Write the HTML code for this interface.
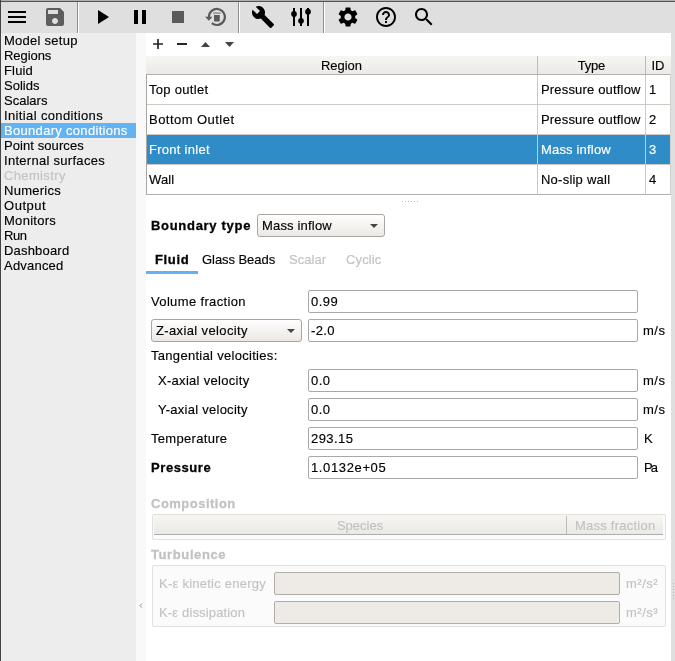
<!DOCTYPE html>
<html><head><meta charset="utf-8">
<style>
*{box-sizing:border-box;margin:0;padding:0}
html,body{width:675px;height:661px;overflow:hidden;background:#ededed}
body{position:relative;font-family:"Liberation Sans",sans-serif;font-size:13px;letter-spacing:0.25px;color:#000}
.a{position:absolute}
.t{position:absolute;line-height:15px;white-space:nowrap;will-change:transform;-webkit-text-stroke:0.15px currentColor}
.b{font-weight:bold;letter-spacing:0.5px}
.dis{color:#c2c2c2}
#tb{left:0;top:0;width:675px;height:33px;background:#dfdfdf}
.sep{position:absolute;top:2px;width:1px;height:31px;background:#8e8e8e}
.sepw{position:absolute;top:2px;width:1px;height:31px;background:#fff}
.ic{position:absolute;top:5px;width:24px;height:24px}
#nav{left:1px;top:33px;width:135px;height:628px;background:#ededed}
.nv{position:absolute;left:4px;line-height:15px;white-space:nowrap}
#spl{left:136px;top:33px;width:10px;height:628px;background:#f9f9f9}
#main{left:146px;top:33px;width:525px;height:628px;background:#fff}
#rs{left:671px;top:33px;width:4px;height:628px;background:#dfdfdf}
.hdr{position:absolute;top:56px;height:18px;background:linear-gradient(#f8f6f2,#ebe9e5)}
.grid{position:absolute;background:#cdcac6}
.le{position:absolute;height:23px;border:1px solid #aaa8a4;border-radius:2px;background:#fff}
.led{position:absolute;height:23px;border:1px solid #b1aeaa;border-radius:2px;background:#eeebe7}
.cb{position:absolute;height:23px;border:1px solid #a9a6a2;border-radius:3px;background:linear-gradient(#fefefe,#ece8e4)}
.arr{position:absolute;width:0;height:0;border-left:4px solid transparent;border-right:4px solid transparent;border-top:4px solid #454545}
</style></head><body>
<!-- toolbar -->
<div id="tb" class="a"></div>
<div class="a" style="left:0;top:0;width:675px;height:1px;background:#aeaeae"></div>
<div class="a" style="left:0;top:1px;width:675px;height:1px;background:#555"></div>
<div class="a" style="left:0;top:0;width:1px;height:661px;background:#434544"></div>
<div class="sep" style="left:77px"></div><div class="sepw" style="left:78px"></div>
<div class="sep" style="left:238px"></div><div class="sepw" style="left:239px"></div>
<div class="sep" style="left:323px"></div><div class="sepw" style="left:324px"></div>

<svg class="ic" style="left:5px" viewBox="0 0 24 24"><path fill="#000" d="M3 18h18v-2H3v2zm0-5h18v-2H3v2zm0-7v2h18V6H3z"/></svg>
<svg class="ic" style="left:43px" viewBox="0 0 24 24"><path fill="#5e5d5b" d="M17 3H5c-1.11 0-2 .9-2 2v14c0 1.1.89 2 2 2h14c1.1 0 2-.9 2-2V7l-4-4zm-5 16c-1.66 0-3-1.34-3-3s1.34-3 3-3 3 1.34 3 3-1.34 3-3 3zm3-10H5V5h10v4z"/></svg>
<svg class="ic" style="left:90px" viewBox="0 0 24 24"><path fill="#000" d="M8 5v14l11-7z"/></svg>
<svg class="ic" style="left:128px" viewBox="0 0 24 24"><path fill="#000" d="M6 19h4V5H6v14zm8-14v14h4V5h-4z"/></svg>
<svg class="ic" style="left:166px" viewBox="0 0 24 24"><path fill="#5a5a5a" d="M6 6h12v12H6z"/></svg>
<svg class="ic" style="left:204px" viewBox="0 0 24 24"><path d="M4.9 12 A8 8 0 1 1 7.76 18.13" fill="none" stroke="#5a5a5a" stroke-width="2.2"/><path fill="#5a5a5a" d="M1.1 11.8h7.4l-3.7 3.9z"/><path fill="#5a5a5a" opacity="0.75" d="M9.2 7.5h7.5v1.2h-7.5z"/><path fill="#5a5a5a" d="M10 10h5.8l-0.1 6.6h-5.6z"/></svg>
<svg class="ic" style="left:251px" viewBox="0 0 24 24"><path fill="#000" d="M22.7 19l-9.1-9.1c.9-2.3.4-5-1.5-6.9-2-2-5-2.4-7.4-1.3L9 6 6 9 1.6 4.7C.4 7.1.9 10.1 2.9 12.1c1.9 1.9 4.6 2.4 6.9 1.5l9.1 9.1c.4.4 1 .4 1.4 0l2.3-2.3c.5-.4.5-1.1.1-1.4z"/></svg>
<svg class="ic" style="left:289px" viewBox="0 0 24 24"><g fill="#000"><rect x="4" y="3" width="2" height="18"/><rect x="11" y="3" width="2" height="18"/><rect x="18" y="3" width="2" height="18"/><ellipse cx="5" cy="8.9" rx="2.85" ry="2.9"/><ellipse cx="12" cy="15.8" rx="2.85" ry="2.9"/><ellipse cx="19" cy="6.7" rx="2.85" ry="2.9"/></g></svg>
<svg class="ic" style="left:336px" viewBox="0 0 24 24"><path fill="#000" d="M19.14 12.94c.04-.3.06-.61.06-.94 0-.32-.02-.64-.07-.94l2.03-1.58c.18-.14.23-.41.12-.61l-1.92-3.32c-.12-.22-.37-.29-.59-.22l-2.39.96c-.5-.38-1.03-.7-1.62-.94l-.36-2.54c-.04-.24-.24-.41-.48-.41h-3.84c-.24 0-.43.17-.47.41l-.36 2.54c-.59.24-1.13.57-1.62.94l-2.39-.96c-.22-.08-.47 0-.59.22L2.74 8.87c-.12.21-.08.47.12.61l2.03 1.58c-.05.3-.09.63-.09.94s.02.64.07.94l-2.03 1.58c-.18.14-.23.41-.12.61l1.92 3.32c.12.22.37.29.59.22l2.39-.96c.5.38 1.030.7 1.62.94l.36 2.54c.05.24.24.41.48.41h3.84c.24 0 .44-.17.47-.41l.36-2.54c.59-.24 1.13-.56 1.62-.94l2.39.96c.22.08.47 0 .59-.22l1.92-3.32c.12-.22.07-.47-.12-.61l-2.01-1.58zM12 15.6c-1.98 0-3.6-1.62-3.6-3.6s1.62-3.6 3.6-3.6 3.6 1.62 3.6 3.6-1.62 3.6-3.6 3.6z"/></svg>
<svg class="ic" style="left:374px" viewBox="0 0 24 24"><path fill="#000" d="M11 18h2v-2h-2v2zm1-16C6.48 2 2 6.48 2 12s4.48 10 10 10 10-4.48 10-10S17.52 2 12 2zm0 18c-4.41 0-8-3.59-8-8s3.59-8 8-8 8 3.59 8 8-3.59 8-8 8zm0-14c-2.21 0-4 1.790-4 4h2c0-1.1.9-2 2-2s2 .9 2 2c0 2-3 1.75-3 5h2c0-2.25 3-2.5 3-5 0-2.21-1.79-4-4-4z"/></svg>
<svg class="ic" style="left:412px" viewBox="0 0 24 24"><path fill="#000" d="M15.5 14h-.79l-.28-.27C15.41 12.59 16 11.110 16 9.5 16 5.91 13.09 3 9.5 3S3 5.91 3 9.5 5.91 16 9.5 16c1.61 0 3.09-.59 4.23-1.57l.27.28v.79l5 4.99L20.49 19l-4.99-5zm-6 0C7.01 14 5 11.99 5 9.5S7.01 5 9.5 5 14 7.01 14 9.5 11.99 14 9.5 14z"/></svg>

<!-- nav -->
<div id="nav" class="a">
<div class="a" style="left:0;top:90px;width:135px;height:15px;background:#63b3f3"></div>
</div>
<div id="spl" class="a"></div>
<svg class="a" style="left:139px;top:603px" width="4" height="5" viewBox="0 0 4 5"><path d="M2.8 0.5 L1.0 2.5 L2.8 4.5" fill="none" stroke="#8a8a8a" stroke-width="1"/></svg>
<div id="main" class="a"></div>
<div id="rs" class="a"></div>

<!-- main content -->
<!-- mini toolbar -->
<svg class="a" style="left:153px;top:39px" width="10" height="10" viewBox="0 0 10 10"><path d="M5 0v10M0 5h10" stroke="#262626" stroke-width="1.7" fill="none"/></svg>
<div class="a" style="left:177px;top:43.2px;width:10px;height:1.7px;background:#262626"></div>
<svg class="a" style="left:201px;top:42px" width="9" height="5" viewBox="0 0 9 5"><path d="M4.5 0L9 5H0z" fill="#444"/></svg>
<svg class="a" style="left:225px;top:42px" width="9" height="5" viewBox="0 0 9 5"><path d="M0 0H9L4.5 5z" fill="#444"/></svg>

<!-- table -->
<div class="hdr" style="left:146px;width:525px"></div>
<div class="a" style="left:146px;top:74px;width:525px;height:1px;background:#b3b0ab"></div>
<div class="a" style="left:537px;top:56px;width:1px;height:18px;background:#bfbcb8"></div>
<div class="a" style="left:645px;top:56px;width:1px;height:18px;background:#bfbcb8"></div>
<div class="a" style="left:146px;top:74px;width:1px;height:121px;background:#a9a6a2"></div>
<div class="a" style="left:670px;top:74px;width:1px;height:121px;background:#d4d2ce"></div>
<div class="a" style="left:147px;top:135px;width:523px;height:29px;background:#308cc6"></div>
<div class="grid" style="left:147px;top:104px;width:523px;height:1px"></div>
<div class="grid" style="left:147px;top:134px;width:523px;height:1px"></div>
<div class="grid" style="left:147px;top:164px;width:523px;height:1px"></div>
<div class="a" style="left:146px;top:194px;width:525px;height:1px;background:#b3b0ab"></div>
<div class="grid" style="left:537px;top:75px;width:1px;height:119px"></div>
<div class="grid" style="left:645px;top:75px;width:1px;height:119px"></div>
<!-- splitter dots -->
<div class="a" style="left:402px;top:201px;width:1px;height:1px;background:#bbb"></div>
<div class="a" style="left:405px;top:201px;width:1px;height:1px;background:#bbb"></div>
<div class="a" style="left:408px;top:201px;width:1px;height:1px;background:#bbb"></div>
<div class="a" style="left:411px;top:201px;width:1px;height:1px;background:#bbb"></div>
<div class="a" style="left:414px;top:201px;width:1px;height:1px;background:#bbb"></div>
<div class="a" style="left:417px;top:201px;width:1px;height:1px;background:#bbb"></div>

<!-- boundary type -->
<div class="cb" style="left:257px;top:214px;width:128px"></div>
<div class="arr" style="left:370px;top:224px"></div>

<!-- tabs -->
<div class="a" style="left:146px;top:271px;width:52px;height:3px;background:#62b1f5"></div>

<!-- form -->
<div class="le" style="left:308px;top:290px;width:330px"></div>

<div class="cb" style="left:151px;top:319px;width:151px"></div>
<div class="arr" style="left:287px;top:329px"></div>
<div class="le" style="left:308px;top:319px;width:330px"></div>


<div class="le" style="left:308px;top:369px;width:330px"></div>

<div class="le" style="left:308px;top:398px;width:330px"></div>

<div class="le" style="left:308px;top:427px;width:330px"></div>

<div class="le" style="left:308px;top:456px;width:330px"></div>

<!-- composition -->
<div class="a" style="left:152px;top:514px;width:514px;height:26px;border:1px solid #e2e0dd;border-radius:2px;background:#fbfbfb"></div>
<div class="hdr" style="left:154px;top:515px;width:509px;height:19px"></div>
<div class="a" style="left:154px;top:534px;width:509px;height:1px;background:#b0aeaa"></div>
<div class="a" style="left:566px;top:516px;width:1px;height:18px;background:#bfbcb8"></div>

<!-- turbulence -->
<div class="a" style="left:152px;top:565px;width:514px;height:62px;border:1px solid #e2e0dd;border-radius:2px;background:#fbfbfb"></div>
<div class="led" style="left:274px;top:572px;width:346px"></div>
<div class="led" style="left:274px;top:601px;width:346px"></div>

<!-- right splitter dots -->
<div class="a" style="left:673px;top:583px;width:1px;height:1px;background:#b4b4b4"></div>
<div class="a" style="left:673px;top:586px;width:1px;height:1px;background:#b4b4b4"></div>
<div class="a" style="left:673px;top:589px;width:1px;height:1px;background:#b4b4b4"></div>
<div class="a" style="left:673px;top:592px;width:1px;height:1px;background:#b4b4b4"></div>
<div class="a" style="left:673px;top:595px;width:1px;height:1px;background:#b4b4b4"></div>
<div class="a" style="left:673px;top:598px;width:1px;height:1px;background:#b4b4b4"></div>

<div class="t" style="left:4px;top:33px;letter-spacing:0.259px;">Model setup</div>
<div class="t" style="left:4px;top:48px;letter-spacing:-0.060px;">Regions</div>
<div class="t" style="left:4px;top:63px;letter-spacing:0.152px;">Fluid</div>
<div class="t" style="left:4px;top:78px;letter-spacing:0.016px;">Solids</div>
<div class="t" style="left:4px;top:93px;letter-spacing:0.016px;">Scalars</div>
<div class="t" style="left:4px;top:108px;letter-spacing:0.366px;">Initial conditions</div>
<div class="t" style="left:4px;top:123px;letter-spacing:0.307px;color:#ffffff;">Boundary conditions</div>
<div class="t" style="left:4px;top:138px;letter-spacing:0.078px;">Point sources</div>
<div class="t" style="left:4px;top:153px;letter-spacing:0.286px;">Internal surfaces</div>
<div class="t" style="left:4px;top:168px;letter-spacing:0.359px;color:#c2c2c2;">Chemistry</div>
<div class="t" style="left:4px;top:183px;letter-spacing:0.268px;">Numerics</div>
<div class="t" style="left:4px;top:198px;letter-spacing:0.534px;">Output</div>
<div class="t" style="left:4px;top:213px;letter-spacing:0.288px;">Monitors</div>
<div class="t" style="left:4px;top:228px;letter-spacing:-0.414px;">Run</div>
<div class="t" style="left:4px;top:243px;letter-spacing:0.189px;">Dashboard</div>
<div class="t" style="left:4px;top:258px;letter-spacing:0.210px;">Advanced</div>
<div class="t" style="left:146px;top:58px;letter-spacing:-0.022px;width:391px;text-align:center;text-indent:-0.022px;">Region</div>
<div class="t" style="left:538px;top:58px;letter-spacing:-0.203px;width:107px;text-align:center;text-indent:-0.203px;">Type</div>
<div class="t" style="left:646px;top:58px;letter-spacing:-0.219px;width:24px;text-align:center;text-indent:-0.219px;">ID</div>
<div class="t" style="left:149px;top:82px;letter-spacing:0.307px;">Top outlet</div>
<div class="t" style="left:541px;top:82px;letter-spacing:0.174px;">Pressure outflow</div>
<div class="t" style="left:649px;top:82px;letter-spacing:0.000px;">1</div>
<div class="t" style="left:149px;top:112px;letter-spacing:0.461px;">Bottom Outlet</div>
<div class="t" style="left:541px;top:112px;letter-spacing:0.174px;">Pressure outflow</div>
<div class="t" style="left:649px;top:112px;letter-spacing:0.000px;">2</div>
<div class="t" style="left:149px;top:142px;letter-spacing:0.272px;color:#ffffff;">Front inlet</div>
<div class="t" style="left:541px;top:142px;letter-spacing:0.177px;color:#ffffff;">Mass inflow</div>
<div class="t" style="left:649px;top:142px;letter-spacing:0.000px;color:#ffffff;">3</div>
<div class="t" style="left:149px;top:172px;letter-spacing:0.104px;">Wall</div>
<div class="t" style="left:541px;top:172px;letter-spacing:0.233px;">No-slip wall</div>
<div class="t" style="left:649px;top:172px;letter-spacing:0.000px;">4</div>
<div class="t" style="left:151px;top:218px;letter-spacing:0.698px;font-weight:bold;-webkit-text-stroke:0.3px currentColor;">Boundary type</div>
<div class="t" style="left:262px;top:218px;letter-spacing:0.177px;">Mass inflow</div>
<div class="t" style="left:155px;top:252px;letter-spacing:0.633px;font-weight:bold;-webkit-text-stroke:0.3px currentColor;">Fluid</div>
<div class="t" style="left:202px;top:252px;letter-spacing:-0.056px;">Glass Beads</div>
<div class="t" style="left:289px;top:252px;letter-spacing:0.069px;color:#c2c2c2;">Scalar</div>
<div class="t" style="left:346px;top:252px;letter-spacing:0.131px;color:#c2c2c2;">Cyclic</div>
<div class="t" style="left:151px;top:294px;letter-spacing:0.350px;">Volume fraction</div>
<div class="t" style="left:311px;top:294px;letter-spacing:0.474px;">0.99</div>
<div class="t" style="left:156px;top:323px;letter-spacing:0.371px;">Z-axial velocity</div>
<div class="t" style="left:311px;top:323px;letter-spacing:0.339px;">-2.0</div>
<div class="t" style="left:643px;top:323px;letter-spacing:0.523px;">m/s</div>
<div class="t" style="left:151px;top:348px;letter-spacing:0.299px;">Tangential velocities:</div>
<div class="t" style="left:158px;top:373px;letter-spacing:0.296px;">X-axial velocity</div>
<div class="t" style="left:311px;top:373px;letter-spacing:0.508px;">0.0</div>
<div class="t" style="left:643px;top:373px;letter-spacing:0.523px;">m/s</div>
<div class="t" style="left:158px;top:402px;letter-spacing:0.260px;">Y-axial velocity</div>
<div class="t" style="left:311px;top:402px;letter-spacing:0.508px;">0.0</div>
<div class="t" style="left:643px;top:402px;letter-spacing:0.523px;">m/s</div>
<div class="t" style="left:151px;top:431px;letter-spacing:0.306px;">Temperature</div>
<div class="t" style="left:311px;top:431px;letter-spacing:0.447px;">293.15</div>
<div class="t" style="left:644px;top:431px;letter-spacing:0.000px;">K</div>
<div class="t" style="left:151px;top:460px;letter-spacing:0.583px;font-weight:bold;-webkit-text-stroke:0.3px currentColor;">Pressure</div>
<div class="t" style="left:311px;top:460px;letter-spacing:0.630px;">1.0132e+05</div>
<div class="t" style="left:644px;top:460px;letter-spacing:-1.844px;">Pa</div>
<div class="t" style="left:151px;top:496px;letter-spacing:0.487px;font-weight:bold;-webkit-text-stroke:0.3px currentColor;color:#c2c2c2;">Composition</div>
<div class="t" style="left:154px;top:518px;letter-spacing:-0.010px;color:#c2c2c2;width:412px;text-align:center;text-indent:-0.010px;">Species</div>
<div class="t" style="left:575px;top:518px;letter-spacing:0.234px;color:#c2c2c2;">Mass fraction</div>
<div class="t" style="left:151px;top:547px;letter-spacing:0.604px;font-weight:bold;-webkit-text-stroke:0.3px currentColor;color:#c2c2c2;">Turbulence</div>
<div class="t" style="left:159px;top:576px;letter-spacing:0.245px;color:#c2c2c2;">K-ε kinetic energy</div>
<div class="t" style="left:626px;top:576px;letter-spacing:0.504px;color:#c2c2c2;">m²/s²</div>
<div class="t" style="left:159px;top:605px;letter-spacing:0.152px;color:#c2c2c2;">K-ε dissipation</div>
<div class="t" style="left:626px;top:605px;letter-spacing:0.504px;color:#c2c2c2;">m²/s³</div>
</body></html>
